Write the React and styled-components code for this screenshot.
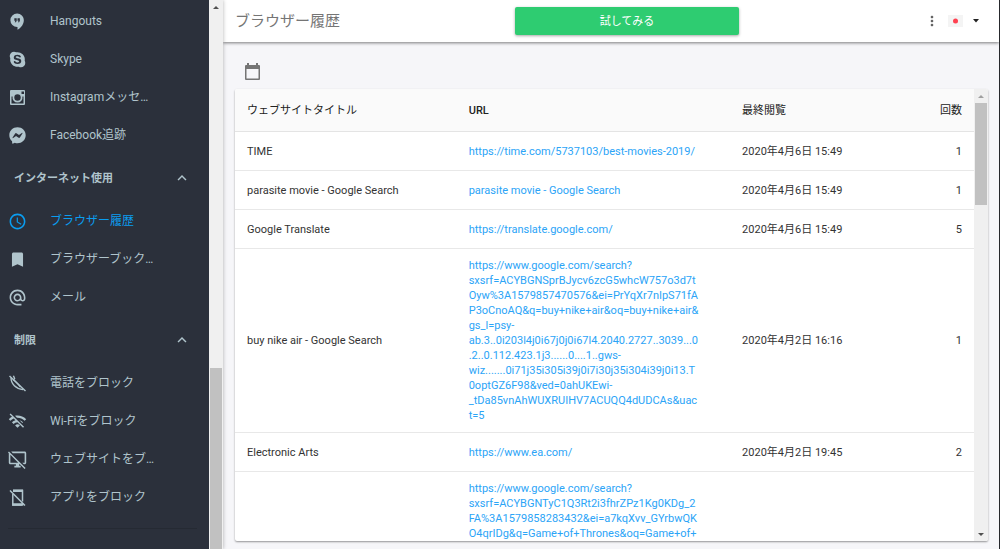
import React from "react";
import styled, { createGlobalStyle } from "styled-components";
import { MdAccessTime, MdBookmark, MdAlternateEmail, MdWifiOff, MdDesktopAccessDisabled, MdMoreVert, MdKeyboardArrowUp } from "react-icons/md";
import { FaFacebookMessenger } from "react-icons/fa";

const GlobalStyle = createGlobalStyle`
  * { box-sizing: border-box; }
  body {
    margin: 0;
    background: #f6f6f9;
    color: #333;
    font-family: Roboto, "Noto Sans CJK JP", sans-serif;
    font-size: 11px;
    line-height: 15px;
  }
  button { font: inherit; border: 0; padding: 0; background: none; color: inherit; cursor: pointer; }
  a { color: inherit; text-decoration: none; }
`;

const Shell = styled.div`
  display: flex;
  height: 100vh;
  overflow: hidden;
  border-right: 1px solid #26282c;
`;

const Sidebar = styled.aside`
  display: flex;
  flex: 0 0 223px;
  min-width: 0;
  background: #2b303b;
  color: #b0c4cc;
  box-shadow: 0 0 4px rgba(0, 0, 0, 0.3);
  z-index: 2;
`;

const Nav = styled.nav`
  flex: 1;
  min-width: 0;
  padding-top: 2px;
  overflow: hidden;
`;

const NavItem = styled.a`
  display: flex;
  align-items: center;
  height: 38px;
  padding: 0 54px 0 8px;
  gap: 23px;
  font-size: 12px;
  color: ${(p) => (p.$active ? "#0a9df0" : "#b0c4cc")};

  svg { flex: none; width: 19px; height: 19px; }
  span { min-width: 0; overflow: hidden; text-overflow: ellipsis; white-space: nowrap; }
`;

const Section = styled.button`
  && {
    display: flex;
    align-items: center;
    justify-content: space-between;
    width: 100%;
    height: 48px;
    padding: 0 18px 0 14px;
    font-weight: 700;
  }
  svg { width: 18px; height: 18px; }
`;

const NavDivider = styled.hr`
  margin: 12px 12px 0 8px;
  border: 0;
  border-top: 1px solid #252a33;
`;

const Track = styled.div`
  display: flex;
  flex-direction: column;
  justify-content: space-between;
  align-items: center;
  flex: 0 0 14px;
  background: #f0f0f0;
`;

const Arrow = styled.span`
  flex: none;
  height: 14px;
  padding: 6px 0;
  &::before {
    content: "";
    display: block;
    border: 3px solid transparent;
    border-top-width: ${(p) => (p.$down ? "3px" : "0")};
    border-bottom-width: ${(p) => (p.$down ? "0" : "3px")};
    border-top-color: ${(p) => p.$color};
    border-bottom-color: ${(p) => p.$color};
  }
`;

const Thumb = styled.span`
  flex: 0 0 ${(p) => p.$size};
  width: 12px;
  margin-bottom: ${(p) => (p.$top ? "auto" : "0")};
  background: #c1c1c1;
`;

const Main = styled.main`
  display: flex;
  flex-direction: column;
  flex: 1;
  min-width: 0;
`;

const TopBar = styled.header`
  display: grid;
  grid-template-columns: 7fr 224px 6fr;
  align-items: center;
  flex: 0 0 42px;
  padding: 0 20px 0 12px;
  background: #fff;
  box-shadow: 0 1px 3px rgba(0, 0, 0, 0.5);
`;

const Title = styled.h1`
  margin: 0;
  font-size: 15px;
  font-weight: 400;
  color: #757575;
`;

const TryButton = styled.button`
  && {
    height: 28px;
    border-radius: 2px;
    background: #2ecc71;
    color: #fff;
    box-shadow: 0 1px 3px rgba(0, 0, 0, 0.35);
  }
`;

const Tools = styled.div`
  display: flex;
  align-items: center;
  justify-content: flex-end;
  gap: 8px;
`;

const IconButton = styled.button`
  display: flex;
  align-items: center;
  color: #616161;
`;

const LanguageButton = styled(IconButton)`
  gap: 10px;
  color: #222;
`;

const Content = styled.section`
  display: flex;
  flex-direction: column;
  flex: 1;
  min-height: 0;
  padding: 21px 11px 8px 12px;
`;

const CalendarButton = styled(IconButton)`
  && { align-self: flex-start; margin: 0 0 9px 9px; }
`;

const Card = styled.div`
  display: flex;
  flex: 1;
  min-height: 0;
  background: #fff;
  border-radius: 2px;
  overflow: hidden;
  box-shadow: 0 1px 2px rgba(0, 0, 0, 0.4);
`;

const TableArea = styled.div`
  flex: 1;
  min-width: 0;
  overflow: hidden;
`;

const Table = styled.table`
  width: 100%;
  table-layout: fixed;
  border-collapse: separate;
  border-spacing: 0;
`;

const Th = styled.th`
  height: 43px;
  width: ${(p) => p.$width};
  padding: 0 12px;
  text-align: ${(p) => p.$align || "left"};
  font-weight: ${(p) => p.$weight || 400};
  color: #222;
  background: #fafafa;
  border-bottom: 1px solid #e4e4e4;
`;

const Td = styled.td`
  height: 39px;
  padding: 9px 12px;
  text-align: ${(p) => p.$align || "left"};
  border-bottom: 1px solid #e8e8e8;
`;

const UrlLink = styled.a`
  display: block;
  max-width: 230px;
  color: #2ba4f7;
  overflow-wrap: anywhere;
`;

const HangoutsIcon = () => (
  <svg viewBox="0 0 24 24" fill="currentColor" fillRule="evenodd"><path d="M15,11L14,13H12.5L13.5,11H12V8H15M11,11L10,13H8.5L9.5,11H8V8H11M11.5,2A8.5,8.5 0 0,0 3,10.5A8.5,8.5 0 0,0 11.5,19H12V22.5C16.86,20.15 20,15 20,10.5C20,5.8 16.19,2 11.5,2Z" /></svg>
);
const SkypeIcon = () => (
  <svg viewBox="1 1 22 22" fill="currentColor"><path d="M18,6C20.07,8.04 20.85,10.89 20.36,13.55C20.77,14.27 21,15.11 21,16A5,5 0 0,1 16,21C15.11,21 14.27,20.77 13.55,20.36C10.89,20.85 8.04,20.07 6,18C3.93,15.96 3.15,13.11 3.64,10.45C3.23,9.73 3,8.89 3,8A5,5 0 0,1 8,3C8.89,3 9.73,3.23 10.45,3.64C13.11,3.15 15.96,3.93 18,6M12.04,17.16C14.91,17.16 16.34,15.78 16.34,13.92C16.34,12.73 15.78,11.46 13.61,10.97L11.62,10.53C10.86,10.36 10,10.13 10,9.42C10,8.7 10.6,8.2 11.7,8.2C13.93,8.2 13.72,9.73 14.83,9.73C15.41,9.73 15.91,9.39 15.91,8.8C15.91,7.43 13.72,6.4 11.86,6.4C9.85,6.4 7.7,7.26 7.7,9.54C7.7,10.64 8.09,11.81 10.25,12.35L12.94,13.03C13.75,13.23 13.95,13.68 13.95,14.1C13.95,14.78 13.27,15.45 12.04,15.45C9.63,15.45 9.96,13.6 8.67,13.6C8.09,13.6 7.67,14 7.67,14.57C7.67,15.68 9,17.16 12.04,17.16Z" /></svg>
);
const InstagramIcon = () => (
  <svg viewBox="-1 -1 19 19" fill="currentColor" fillRule="evenodd">
    <path d="M2 1H15A1 1 0 0 1 16 2V15A1 1 0 0 1 15 16H2A1 1 0 0 1 1 15V2A1 1 0 0 1 2 1ZM12.5 2.5V5H15V2.5ZM2.5 7.5V14.5H14.5V7.5H13.4A5 5 0 1 1 3.6 7.5Z" />
    <circle cx="8.5" cy="8.5" r="3.2" fill="#2b303b" />
  </svg>
);
const MessengerIcon = () => <FaFacebookMessenger viewBox="-32 -32 576 576" />;
const PhoneBlockIcon = () => (
  <svg viewBox="-1 -1 19 19" fill="none" stroke="currentColor" strokeWidth="1.4">
    <path d="M0.5 1L16.5 16" /><path d="M2 2.5C2 9 7 14 14 14.6M4.4 0.8L5.6 3.4L4.6 5C7 6.5 9.5 9.5 11.5 12" />
  </svg>
);
const MobileOffIcon = () => (
  <svg viewBox="-1 -1 19 19" fill="none" stroke="currentColor" strokeWidth="1.5">
    <path d="M1 1.5L16 16.5" /><path d="M3.8 5V16H13.5V14M4 1.5H13.5V12.5" /><path d="M4 1.8H14M3.2 15.4H13" strokeWidth="2.5" />
  </svg>
);
const CalendarIcon = () => (
  <svg width="17" height="17" viewBox="0 0 17 17" fill="#757575" fillRule="evenodd" aria-hidden="true">
    <path d="M3 0H5V2H12V0H14V2H15A1 1 0 0 1 16 3V16A1 1 0 0 1 15 17H2A1 1 0 0 1 1 16V3A1 1 0 0 1 2 2H3ZM2.5 6V15.5H14.5V6Z" />
  </svg>
);
const JapanFlag = () => (
  <svg width="15" height="12" viewBox="0 0 15 12" aria-hidden="true"><rect width="15" height="12" fill="#f4f4f4" /><circle cx="7.5" cy="6" r="2.5" fill="#ff4050" /></svg>
);
const CaretIcon = () => (
  <svg width="6" height="4" viewBox="0 0 6 4" aria-hidden="true"><path d="M0 0H6L3 3.5Z" fill="#222" /></svg>
);

const menu = [
  { items: [["Hangouts", HangoutsIcon], ["Skype", SkypeIcon], ["Instagramメッセージ", InstagramIcon], ["Facebook追跡", MessengerIcon]] },
  { title: "インターネット使用", items: [["ブラウザー履歴", MdAccessTime], ["ブラウザーブックマーク", MdBookmark], ["メール", MdAlternateEmail]] },
  { title: "制限", items: [["電話をブロック", PhoneBlockIcon], ["Wi-Fiをブロック", MdWifiOff], ["ウェブサイトをブロック", MdDesktopAccessDisabled], ["アプリをブロック", MobileOffIcon]] },
];

const rows = [
  ["TIME", "https://time.com/5737103/best-movies-2019/", "2020年4月6日 15:49", 1],
  ["parasite movie - Google Search", "parasite movie - Google Search", "2020年4月6日 15:49", 1],
  ["Google Translate", "https://translate.google.com/", "2020年4月6日 15:49", 5],
  ["buy nike air - Google Search", "https://www.google.com/search?sxsrf=ACYBGNSprBJycv6zcG5whcW757o3d7tOyw%3A1579857470576&ei=PrYqXr7nIpS71fAP3oCnoAQ&q=buy+nike+air&oq=buy+nike+air&gs_l=psy-ab.3..0i203l4j0i67j0j0i67l4.2040.2727..3039...0.2..0.112.423.1j3......0....1..gws-wiz.......0i71j35i305i39j0i7i30j35i304i39j0i13.T0optGZ6F98&ved=0ahUKEwi-_tDa85vnAhWUXRUIHV7ACUQQ4dUDCAs&uact=5", "2020年4月2日 16:16", 1],
  ["Electronic Arts", "https://www.ea.com/", "2020年4月2日 19:45", 2],
  ["", "https://www.google.com/search?sxsrf=ACYBGNTyC1Q3Rt2i3fhrZPz1Kg0KDg_2FA%3A1579858283432&ei=a7kqXvv_GYrbwQKO4qrIDg&q=Game+of+Thrones&oq=Game+of+", "", ""],
];

export default function App() {
  return (
    <>
      <GlobalStyle />
      <Shell>
        <Sidebar>
          <Nav>
            {menu.map((group, i) => (
              <React.Fragment key={i}>
                {group.title && <Section type="button">{group.title}<MdKeyboardArrowUp /></Section>}
                {group.items.map(([label, Icon]) => (
                  <NavItem key={label} href="#" $active={label === "ブラウザー履歴"}><Icon /><span>{label}</span></NavItem>
                ))}
              </React.Fragment>
            ))}
            <NavDivider />
          </Nav>
          <Track>
            <Arrow $color="#505050" />
            <Thumb $size="33%" />
          </Track>
        </Sidebar>
        <Main>
          <TopBar>
            <Title>ブラウザー履歴</Title>
            <TryButton type="button">試してみる</TryButton>
            <Tools>
              <IconButton type="button" aria-label="メニュー"><MdMoreVert size={16} /></IconButton>
              <LanguageButton type="button" aria-label="言語"><JapanFlag /><CaretIcon /></LanguageButton>
            </Tools>
          </TopBar>
          <Content>
            <CalendarButton type="button" aria-label="カレンダー"><CalendarIcon /></CalendarButton>
            <Card>
              <TableArea>
                <Table>
                  <thead>
                    <tr>
                      <Th $width="30%">ウェブサイトタイトル</Th>
                      <Th $width="37%" $weight={500}>URL</Th>
                      <Th>最終閲覧</Th>
                      <Th $width="10%" $align="right">回数</Th>
                    </tr>
                  </thead>
                  <tbody>
                    {rows.map(([title, url, seen, count], i) => (
                      <tr key={i}>
                        <Td>{title}</Td>
                        <Td><UrlLink href="#">{url}</UrlLink></Td>
                        <Td>{seen}</Td>
                        <Td $align="right">{count}</Td>
                      </tr>
                    ))}
                  </tbody>
                </Table>
              </TableArea>
              <Track>
                <Arrow $color="#a0a0a0" />
                <Thumb $size="102px" $top />
                <Arrow $color="#505050" $down />
              </Track>
            </Card>
          </Content>
        </Main>
      </Shell>
    </>
  );
}
